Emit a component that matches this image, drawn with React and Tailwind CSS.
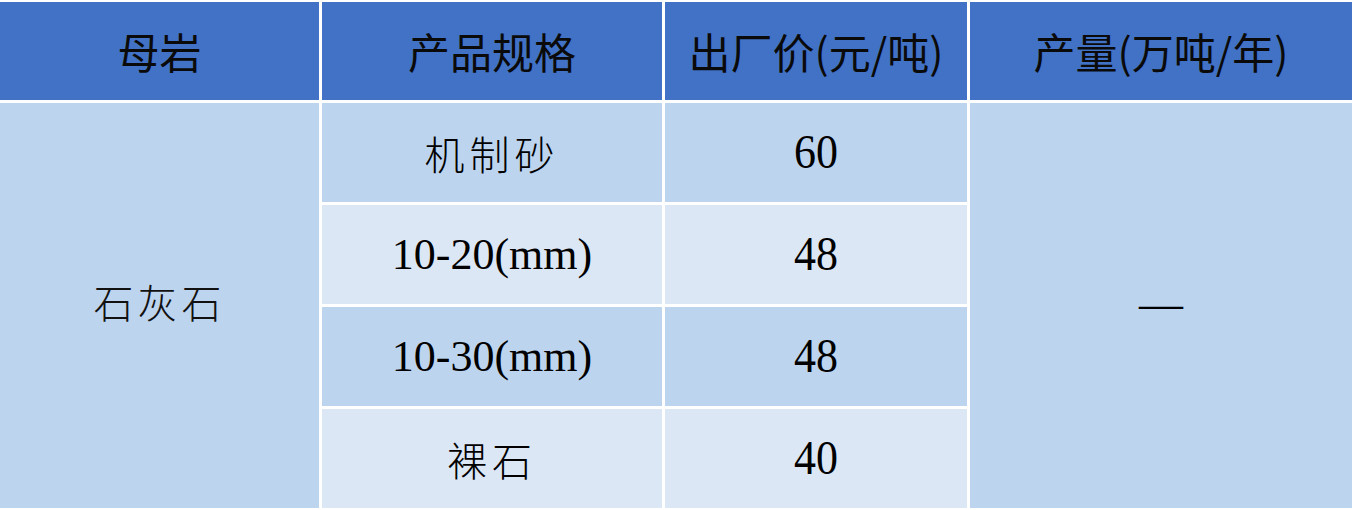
import React from 'react';

const rows = [
    { spec: '机制砂', price: '60', cjk: true, shade: 'bg-[#bdd4ef]' },
    { spec: '10-20(mm)', price: '48', cjk: false, shade: 'bg-[#dce7f5]' },
    { spec: '10-30(mm)', price: '48', cjk: false, shade: 'bg-[#bdd4ef]' },
    { spec: '裸石', price: '40', cjk: true, shade: 'bg-[#dce7f5]' },
];

const headers = ['母岩', '产品规格', '出厂价(元/吨)', '产量(万吨/年)'];

const App = () => {
    return (
        <div className="w-[1352px] h-[510px] bg-white pt-[2px] pb-[2px] overflow-hidden">
            <div className="grid grid-cols-[319px_340px_302px_382px] grid-rows-[98px_99px_99px_99px_99px] gap-[3px] text-black">
                {headers.map((h) => (
                    <div
                        key={h}
                        className="bg-[#4172c6] flex items-center justify-center pb-[2px] text-[42px] font-normal font-['Noto_Sans_CJK_SC',sans-serif] text-[#0a0a0a]"
                    >
                        {h}
                    </div>
                ))}

                <div className="row-start-2 row-span-4 col-start-1 bg-[#bdd4ef] flex items-center justify-center pb-[10px] text-[40px] font-light tracking-[4px] text-[#111] font-['Noto_Sans_CJK_SC',sans-serif]">
                    石灰石
                </div>

                {rows.map((r, i) => (
                    <React.Fragment key={i}>
                        <div
                            className={`col-start-2 ${r.shade} flex items-center justify-center ${r.cjk ? "text-[40px] font-light tracking-[5px] font-['Noto_Sans_CJK_SC',sans-serif]" : "text-[44px] font-['Liberation_Serif',serif]"}`}
                        >
                            {r.spec}
                        </div>
                        <div className={`col-start-3 ${r.shade} flex items-center justify-center text-[44px] font-['Liberation_Serif',serif]`}>
                            <span className="inline-block scale-y-110">{r.price}</span>
                        </div>
                    </React.Fragment>
                ))}

                <div className="row-start-2 row-span-4 col-start-4 bg-[#bdd4ef] flex items-center justify-center pb-[4px] text-[44px] font-light font-['Liberation_Serif',serif]">
                    —
                </div>
            </div>
        </div>
    );
};

export default App;
